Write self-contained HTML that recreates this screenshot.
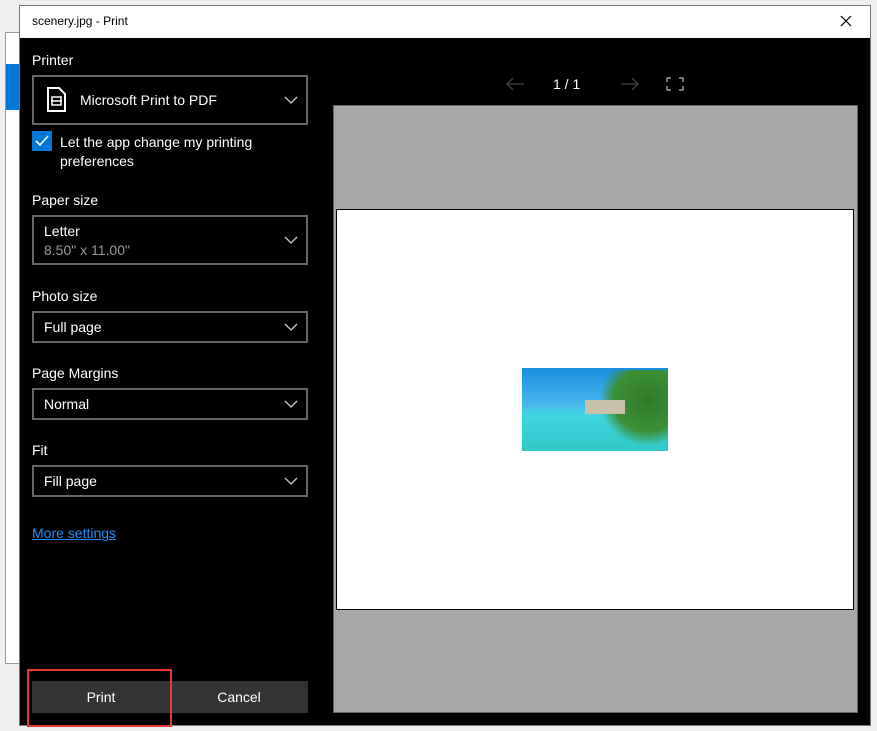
<!DOCTYPE html><html><head><style>
*{margin:0;padding:0;box-sizing:border-box}
body{width:877px;height:731px;background:#f0f0f0;position:relative;overflow:hidden;font-family:"Liberation Sans",sans-serif}
.a{position:absolute}
.lbl{position:absolute;left:32px;color:#fff;font-size:14px}
.dd{position:absolute;left:32px;width:276px;border:2px solid #666;color:#fff;font-size:14px}
.dd span{position:absolute;left:10px}
.chev{position:absolute;right:8px;width:14px;height:8px}
</style></head><body>
<div class="a" style="left:5px;top:32px;width:20px;height:632px;background:#fff;border:1px solid #999"></div>
<div class="a" style="left:6px;top:64px;width:14px;height:46px;background:#0078d7"></div>
<div class="a" style="left:19px;top:5px;width:852px;height:721px;border:1px solid #777;background:#000"></div>
<div class="a" style="left:20px;top:6px;width:850px;height:32px;background:#fff"></div>
<div class="a" style="left:32px;top:14px;font-size:12px;color:#000">scenery.jpg - Print</div>
<svg class="a" style="left:840px;top:15px" width="12" height="12"><path d="M1 1L11 11M11 1L1 11" stroke="#000" stroke-width="1.2"/></svg>
<div class="lbl" style="top:52px">Printer</div>
<div class="dd" style="top:75px;height:50px">
<svg class="a" style="left:12px;top:10px" width="22" height="26"><path d="M2 1H13L19 7V24H2Z" fill="none" stroke="#fff" stroke-width="2"/><rect x="6" y="10" width="9" height="8" fill="none" stroke="#fff" stroke-width="1.5"/><path d="M5 14H16" stroke="#fff" stroke-width="1.5"/></svg>
<span style="left:46px;top:15px">Microsoft Print to PDF</span>
<svg class="chev" style="top:19px" viewBox="0 0 14 8"><path d="M1 1L7 7L13 1" fill="none" stroke="#ccc" stroke-width="1.3"/></svg></div>
<div class="a" style="left:32px;top:131px;width:20px;height:20px;background:#0078d7"></div>
<svg class="a" style="left:33px;top:132px" width="18" height="18"><path d="M3 9L7 13L15 4" fill="none" stroke="#fff" stroke-width="1.6"/></svg>
<div class="a" style="left:60px;top:133px;color:#fff;font-size:14px;line-height:19px">Let the app change my printing<br>preferences</div>
<div class="lbl" style="top:192px">Paper size</div>
<div class="dd" style="top:215px;height:50px"><span style="top:6px">Letter</span><span style="top:25px;color:#999">8.50" x 11.00"</span>
<svg class="chev" style="top:19px" viewBox="0 0 14 8"><path d="M1 1L7 7L13 1" fill="none" stroke="#ccc" stroke-width="1.3"/></svg></div>
<div class="lbl" style="top:288px">Photo size</div>
<div class="dd" style="top:311px;height:32px"><span style="top:6px">Full page</span><svg class="chev" style="top:10px" viewBox="0 0 14 8"><path d="M1 1L7 7L13 1" fill="none" stroke="#ccc" stroke-width="1.3"/></svg></div>
<div class="lbl" style="top:365px">Page Margins</div>
<div class="dd" style="top:388px;height:32px"><span style="top:6px">Normal</span><svg class="chev" style="top:10px" viewBox="0 0 14 8"><path d="M1 1L7 7L13 1" fill="none" stroke="#ccc" stroke-width="1.3"/></svg></div>
<div class="lbl" style="top:442px">Fit</div>
<div class="dd" style="top:465px;height:32px"><span style="top:6px">Fill page</span><svg class="chev" style="top:10px" viewBox="0 0 14 8"><path d="M1 1L7 7L13 1" fill="none" stroke="#ccc" stroke-width="1.3"/></svg></div>
<div class="a" style="left:32px;top:525px;color:#1e90ff;font-size:14px;text-decoration:underline">More settings</div>
<div class="a" style="left:32px;top:681px;width:138px;height:32px;background:#333;color:#fff;font-size:14px;text-align:center;line-height:32px">Print</div>
<div class="a" style="left:170px;top:681px;width:138px;height:32px;background:#333;color:#fff;font-size:14px;text-align:center;line-height:32px">Cancel</div>
<div class="a" style="left:27px;top:669px;width:145px;height:58px;border:2px solid #e53935"></div>
<svg class="a" style="left:505px;top:76px" width="20" height="16"><path d="M19 8H2M8 2L2 8L8 14" fill="none" stroke="#444" stroke-width="1.3"/></svg>
<div class="a" style="left:553px;top:76px;color:#fff;font-size:14px">1 / 1</div>
<svg class="a" style="left:620px;top:76px" width="20" height="16"><path d="M1 8H18M12 2L18 8L12 14" fill="none" stroke="#444" stroke-width="1.3"/></svg>
<svg class="a" style="left:666px;top:77px" width="18" height="14"><path d="M1 5V1H5M13 1H17V5M17 9V13H13M5 13H1V9" fill="none" stroke="#bbb" stroke-width="1.2"/></svg>
<div class="a" style="left:333px;top:105px;width:525px;height:608px;background:#a9a9a9;border:1px solid #666"></div>
<div class="a" style="left:336px;top:209px;width:518px;height:401px;background:#fff;border:1px solid #000"></div>
<div class="a" style="left:522px;top:368px;width:146px;height:83px;background:linear-gradient(180deg,#1a8ee0 0%,#4ab8ee 45%,#3fd6e0 55%,#2fc9c9 100%)"></div>
<div class="a" style="left:600px;top:370px;width:68px;height:75px;background:radial-gradient(ellipse at 70% 40%,#2f7a2a 0%,#3d8f35 50%,rgba(60,140,60,0) 72%)"></div>
<div class="a" style="left:585px;top:400px;width:40px;height:14px;background:#c9c2a8"></div>
</body></html>
